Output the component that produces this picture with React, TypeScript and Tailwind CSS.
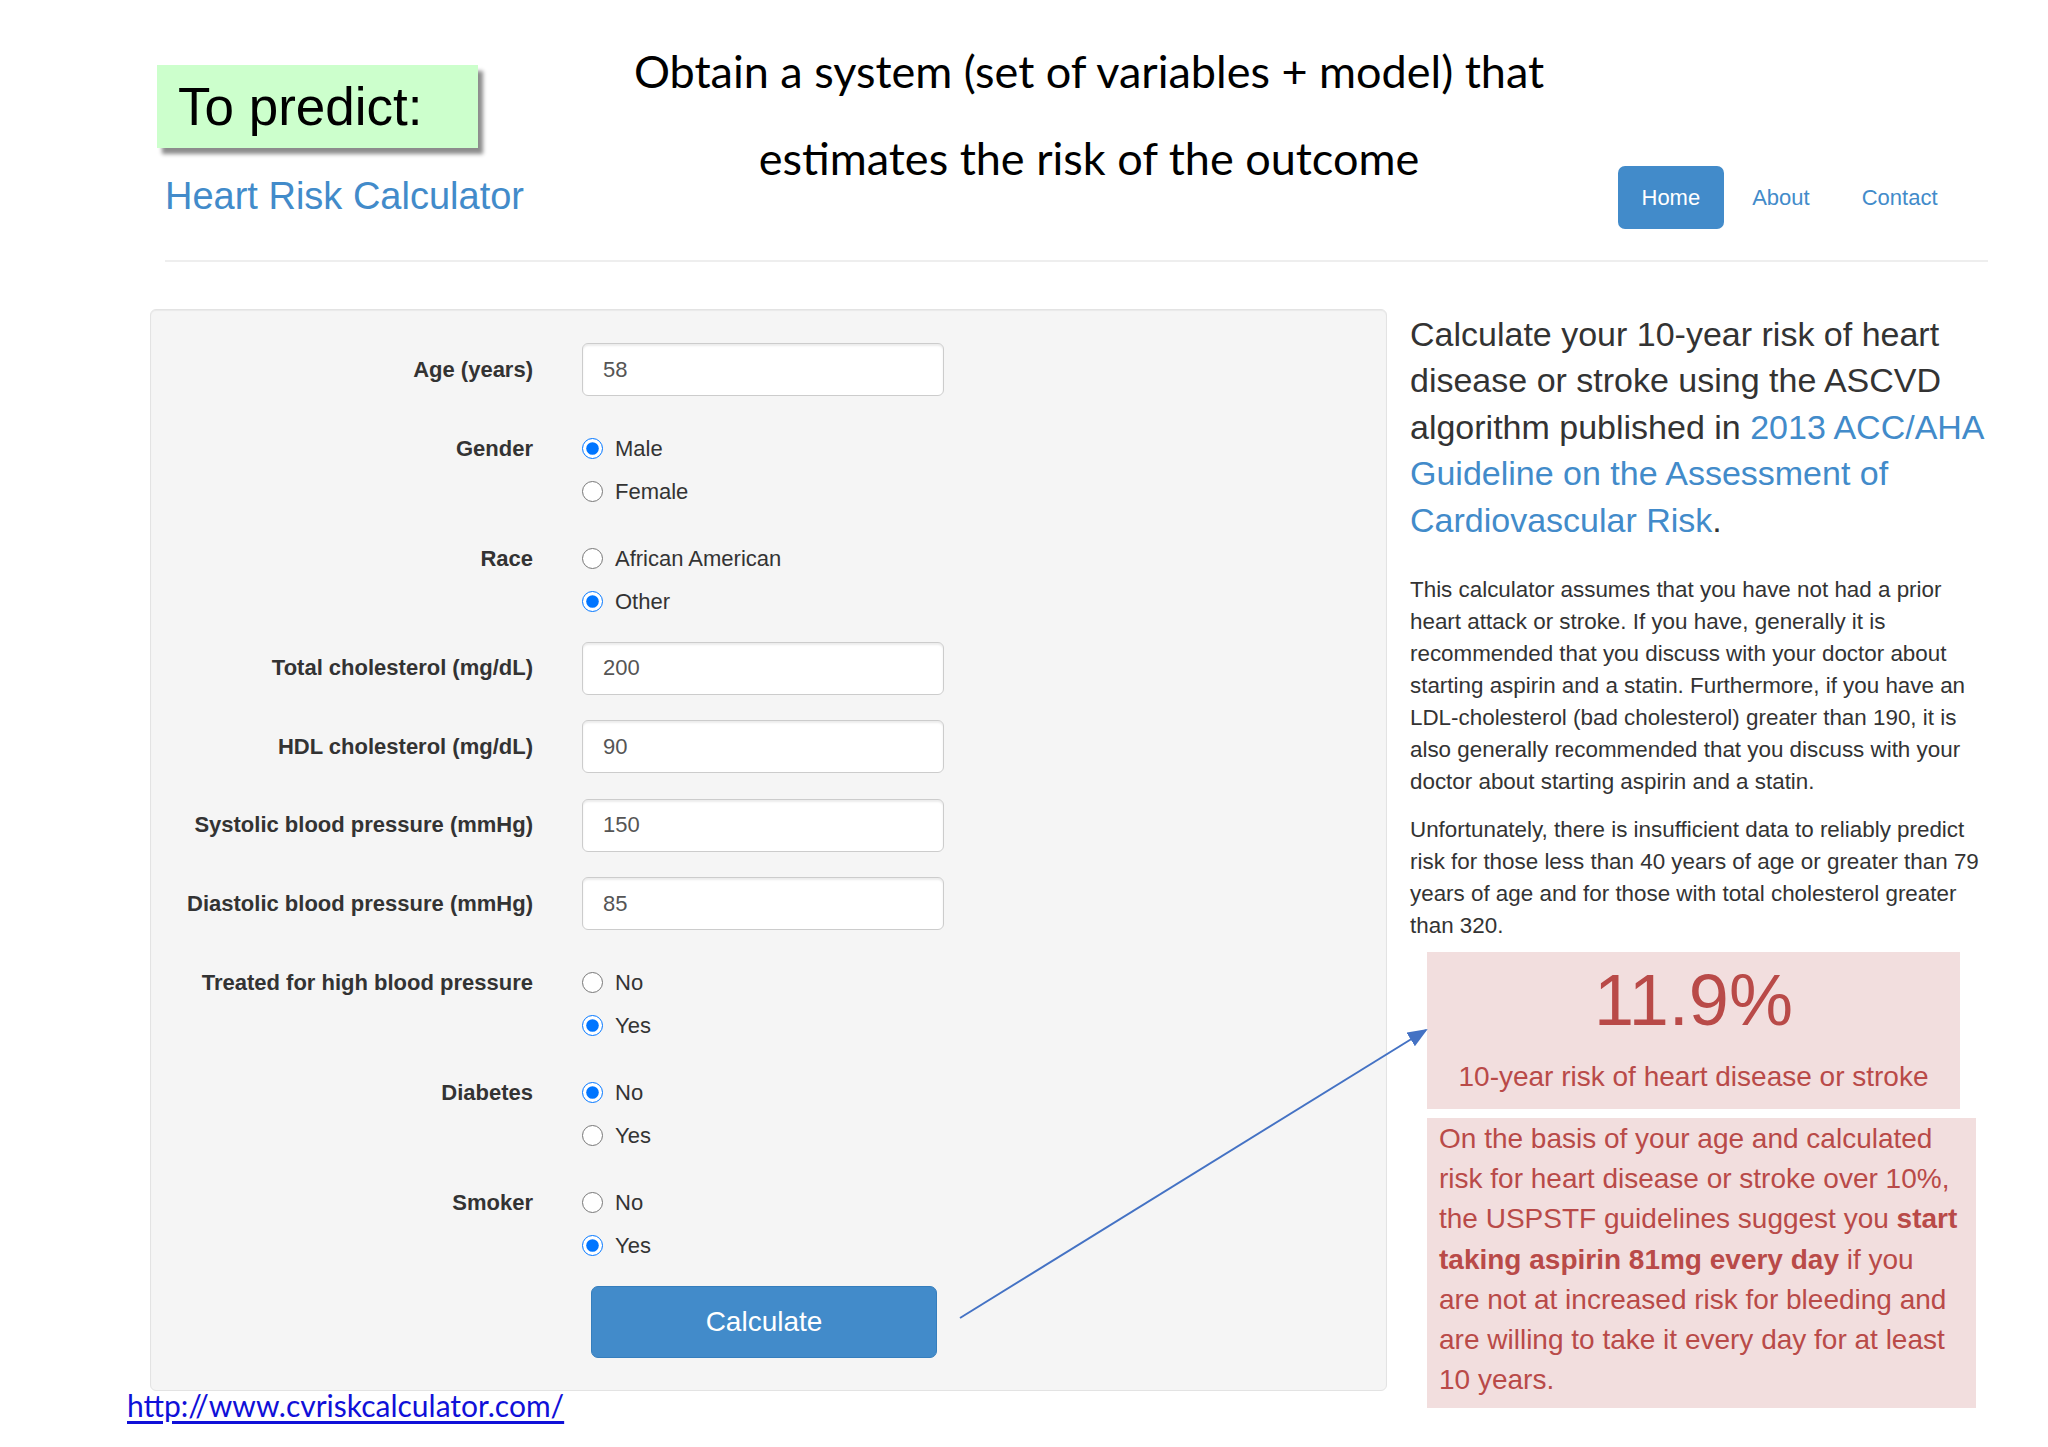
import React from 'react';

const BLUE = 'text-[#428bca]';

function InputRow({ label, value }: { label: string; value: string }) {
  return (
    <div className="flex items-center mb-[25.5px]">
      <div className="w-[382px] text-right text-[22px] font-bold text-[#333] leading-none">{label}</div>
      <div className="ml-[49px] w-[362px] h-[53px]">
        <input
          defaultValue={value}
          className="w-full h-full bg-white border border-[#ccc] rounded-[6px] pl-[20px] text-[22px] text-[#555] shadow-[inset_0_2px_2px_rgba(0,0,0,0.08)] outline-none font-['Liberation_Sans',Arial,sans-serif]"
        />
      </div>
    </div>
  );
}

function RadioRow({
  label,
  name,
  options,
  checked,
}: {
  label: string;
  name: string;
  options: string[];
  checked: string;
}) {
  return (
    <div className="flex pt-[5px] mb-[19px]">
      <div className="w-[382px] h-[43px] flex items-center justify-end text-[22px] font-bold text-[#333]">{label}</div>
      <div className="ml-[49px] flex flex-col">
        {options.map((o) => (
          <label key={o} className="h-[43px] flex items-center gap-[12px] text-[22px] text-[#333]">
            <input type="radio" name={name} defaultChecked={o === checked} className="w-[21px] h-[21px] m-0" />
            {o}
          </label>
        ))}
      </div>
    </div>
  );
}

export default function App() {
  return (
    <div className="relative w-[2048px] h-[1447px] bg-white overflow-hidden font-['Liberation_Sans',Arial,sans-serif]">
      {/* Header */}
      <div className="flex h-[260px] items-start">
        <div className="w-[560px] pl-[157px] pt-[65px]">
          <div className="w-[321px] h-[83px] bg-[#ccffcc] shadow-[5px_6px_4px_rgba(0,0,0,0.45)] flex items-center pl-[21px] text-[53px] text-black leading-none">
            To predict:
          </div>
          <div className={`ml-[8px] mt-[25px] text-[38px] leading-[46px] ${BLUE}`}>Heart Risk Calculator</div>
        </div>
        <div className="w-[1058px] pt-[28px] text-center font-['Lato',sans-serif] text-[45px] leading-[87px] text-black">
          Obtain a system (set of variables + model) that
          <br />
          estimates the risk of the outcome
        </div>
        <div className="pt-[166px] flex gap-[5px] text-[22px]">
          <div className="h-[63px] px-[23.5px] flex items-center rounded-[7px] bg-[#428bca] text-white">Home</div>
          <div className={`h-[63px] px-[23.5px] flex items-center ${BLUE}`}>About</div>
          <div className={`h-[63px] px-[23.5px] flex items-center ${BLUE}`}>Contact</div>
        </div>
      </div>
      <div className="ml-[165px] w-[1823px] border-t-2 border-[#eeeeee]" />

      {/* Main */}
      <div className="flex mt-[47px] ml-[150px]">
        <div className="w-[1237px]">
          <div className="border border-[#e3e3e3] bg-[#f5f5f5] rounded-[6px] pt-[33px] pb-[32px] shadow-[inset_0_1px_1px_rgba(0,0,0,0.05)]">
            <InputRow label="Age (years)" value="58" />
            <RadioRow label="Gender" name="gender" options={['Male', 'Female']} checked="Male" />
            <RadioRow label="Race" name="race" options={['African American', 'Other']} checked="Other" />
            <InputRow label="Total cholesterol (mg/dL)" value="200" />
            <InputRow label="HDL cholesterol (mg/dL)" value="90" />
            <InputRow label="Systolic blood pressure (mmHg)" value="150" />
            <InputRow label="Diastolic blood pressure (mmHg)" value="85" />
            <RadioRow label="Treated for high blood pressure" name="treated" options={['No', 'Yes']} checked="Yes" />
            <RadioRow label="Diabetes" name="diabetes" options={['No', 'Yes']} checked="No" />
            <RadioRow label="Smoker" name="smoker" options={['No', 'Yes']} checked="Yes" />
            <div className="ml-[440px]">
              <button className="w-[346px] h-[72px] rounded-[7px] bg-[#428bca] border border-[#357ebd] text-white text-[28px]">
                Calculate
              </button>
            </div>
          </div>
          <a
            href="#"
            className="block -ml-[23px] -mt-[1px] font-['Lato',sans-serif] text-[30px] leading-[30px] text-[#1010d8] underline underline-offset-[4px]"
          >
            http://www.cvriskcalculator.com/
          </a>
        </div>

        <div className="ml-[23px] w-[590px] text-[#333] whitespace-nowrap">
          <h2 className="text-[34px] leading-[46.4px] mt-[2px]">
            Calculate your 10-year risk of heart
            <br />
            disease or stroke using the ASCVD
            <br />
            algorithm published in <span className={BLUE}>2013 ACC/AHA</span>
            <br />
            <span className={BLUE}>Guideline on the Assessment of</span>
            <br />
            <span className={BLUE}>Cardiovascular Risk</span>.
          </h2>
          <p className="mt-[31px] text-[22.4px] leading-[32px]">
            This calculator assumes that you have not had a prior
            <br />
            heart attack or stroke. If you have, generally it is
            <br />
            recommended that you discuss with your doctor about
            <br />
            starting aspirin and a statin. Furthermore, if you have an
            <br />
            LDL-cholesterol (bad cholesterol) greater than 190, it is
            <br />
            also generally recommended that you discuss with your
            <br />
            doctor about starting aspirin and a statin.
          </p>
          <p className="mt-[16px] text-[22.4px] leading-[32px]">
            Unfortunately, there is insufficient data to reliably predict
            <br />
            risk for those less than 40 years of age or greater than 79
            <br />
            years of age and for those with total cholesterol greater
            <br />
            than 320.
          </p>

          <div className="ml-[17px] mt-[10px] w-[533px] h-[157px] bg-[#f2dede] text-[#b94a48] flex flex-col items-center pt-[12px]">
            <div className="text-[72px] leading-[72px]">11.9%</div>
            <div className="mt-[24px] text-[28px] leading-[34px]">10-year risk of heart disease or stroke</div>
          </div>
          <div className="ml-[17px] mt-[9px] w-[549px] bg-[#f2dede] text-[#b94a48] text-[28px] leading-[40.2px] pl-[12px] pt-[1px] pb-[8px]">
            On the basis of your age and calculated
            <br />
            risk for heart disease or stroke over 10%,
            <br />
            the USPSTF guidelines suggest you <b>start</b>
            <br />
            <b>taking aspirin 81mg every day</b> if you
            <br />
            are not at increased risk for bleeding and
            <br />
            are willing to take it every day for at least
            <br />
            10 years.
          </div>
        </div>
      </div>

      {/* Annotation arrow */}
      <svg className="absolute inset-0 pointer-events-none" width="2048" height="1447">
        <defs>
          <marker id="ah" markerWidth="10" markerHeight="8" refX="9" refY="4" orient="auto" markerUnits="strokeWidth">
            <path d="M0,0 L10,4 L0,8 z" fill="#4472c4" />
          </marker>
        </defs>
        <line x1="960" y1="1318" x2="1426" y2="1030" stroke="#4472c4" strokeWidth="2" markerEnd="url(#ah)" />
      </svg>
    </div>
  );
}
